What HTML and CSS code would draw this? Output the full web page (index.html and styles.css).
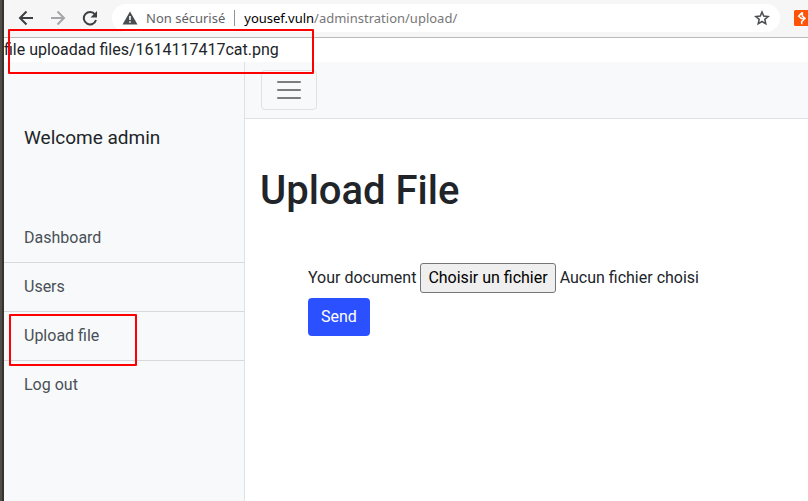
FILE: index.html
```html
<!DOCTYPE html>
<html lang="fr">
<head>
<meta charset="utf-8">
<meta name="viewport" content="width=device-width, initial-scale=1">
<title>Upload File</title>
<link rel="stylesheet" href="styles.css">
</head>
<body>
<div class="window">
  <header class="toolbar">
    <button class="tool" type="button" aria-label="Précédent">
      <svg width="16" height="16" viewBox="0 0 16 16" fill="none" stroke="#3c4043" stroke-width="2"><path d="M15 8H2.5M8.5 1.5 2 8l6.500 6.500"/></svg>
    </button>
    <button class="tool" type="button" aria-label="Suivant" disabled>
      <svg width="16" height="16" viewBox="0 0 16 16" fill="none" stroke="#a5a6a8" stroke-width="2"><path d="M1 8h12.500M7.500 1.500 14 8l-6.500 6.500"/></svg>
    </button>
    <button class="tool" type="button" aria-label="Actualiser">
      <svg width="16" height="16" viewBox="0 0 16 16"><path d="M13 4.500A6.200 6.200 0 1 0 14 10" fill="none" stroke="#3c4043" stroke-width="2"/><path d="M15 1v6.500H8.500z" fill="#3c4043"/></svg>
    </button>
    <div class="address">
      <svg width="16" height="14" viewBox="0 0 16 14"><path d="M8 .5 15.500 13.500H.5z" fill="#4a4d51"/><path d="M7.200 5h1.600v4H7.200zM7.200 10.200h1.600v1.600H7.200z" fill="#fff"/></svg>
      <span class="security">Non sécurisé</span>
      <span class="divider"></span>
      <span class="url"><span class="host">yousef.vuln</span>/adminstration/upload/</span>
      <button class="star" type="button" aria-label="Ajouter aux favoris">
        <svg width="16" height="16" viewBox="0 0 16 16"><path d="m8 2 1.700 4.100 4.500.4-3.400 2.900 1 4.400L8 11.500l-3.800 2.300 1-4.400-3.400-2.900 4.500-.4z" fill="none" stroke="#4a4d51" stroke-width="1.500"/></svg>
      </button>
    </div>
    <button class="extension" type="button" aria-label="Extension">
      <svg width="16" height="16" viewBox="0 0 16 16"><rect width="16" height="16" rx="1.500" fill="#ff5205"/><path d="M8.500 2.200 8.300 6l2.700 2.200-3.400 3.500.2 2.500M8.300 2.200 4.700 6.200l2.600 2.200h3.200" fill="none" stroke="#fff" stroke-width="1.500"/></svg>
    </button>
  </header>

  <div class="notice">file uploadad files/1614117417cat.png<span class="mark mark-notice"></span></div>

  <div class="layout">
    <aside class="sidebar">
      <div class="welcome">Welcome admin</div>
      <nav class="menu">
        <a href="#">Dashboard</a>
        <a href="#">Users</a>
        <a href="#">Upload file<span class="mark mark-item"></span></a>
        <a href="#">Log out</a>
      </nav>
    </aside>
    <div class="page">
      <div class="navbar">
        <button class="toggler" type="button" aria-label="Menu">
          <svg width="30" height="30" viewBox="0 0 30 30" stroke="#7c7d7e" stroke-width="2" stroke-linecap="round"><path d="M4 7h22M4 15h22M4 23h22"/></svg>
        </button>
      </div>
      <main class="content">
        <h1>Upload File</h1>
        <form class="upload">
          <div class="field">
            <label for="document">Your document</label>
            <input class="file-input" id="document" type="file">
            <label class="file-button" for="document">Choisir un fichier</label>
            <span>Aucun fichier choisi</span>
          </div>
          <button class="send" type="button">Send</button>
        </form>
      </main>
    </div>
  </div>
</div>
</body>
</html>
```
FILE: styles.css
```css
* {
  box-sizing: border-box;
}

body {
  margin: 0;
  border-left: 2px solid #504d49;
  background: #fff;
  color: #212529;
  font: 16px/24px Roboto, "Liberation Sans", sans-serif;
}

button {
  margin: 0;
  padding: 0;
  border: 0;
  background: none;
  color: inherit;
  font: inherit;
}

svg {
  display: block;
}

.window {
  display: flex;
  flex-direction: column;
  min-height: 100vh;
  border-left: 2px solid #35322f;
}

.toolbar {
  display: flex;
  align-items: center;
  padding: 4px 0 5px 6px;
  border-bottom: 1px solid #b9b9b9;
  background: #f6f6f6;
  overflow: hidden;
}

.tool {
  display: flex;
  flex: none;
  justify-content: center;
  width: 32px;
}

.address {
  display: flex;
  flex: 1;
  align-items: center;
  min-width: 0;
  height: 28px;
  margin-left: 6px;
  padding: 0 10px;
  border-radius: 14px;
  background: #fff;
  color: #777;
  font: 13px/20px "Noto Sans", "Open Sans", sans-serif;
  white-space: nowrap;
}

.security {
  margin-left: 8px;
  color: #5f6368;
}

.divider {
  width: 1px;
  height: 16px;
  margin: 0 9px;
  background: #919395;
}

.url {
  flex: 1;
  min-width: 0;
  overflow: hidden;
}

.host {
  color: #000;
}

.extension {
  flex: none;
  margin: 0 -2px 0 14px;
}

.notice {
  position: relative;
}

.mark {
  position: absolute;
  z-index: 1;
  border: 2px solid #f00;
  border-radius: 1px;
  pointer-events: none;
}

.mark-notice {
  top: -9px;
  left: 4px;
  width: 306px;
  height: 45px;
}

.mark-item {
  top: 2px;
  left: 5px;
  width: 128px;
  height: 52px;
}

.layout {
  display: flex;
  flex: 1;
}

.sidebar {
  flex: none;
  width: 241px;
  border-right: 1px solid #dee2e6;
  background: #f8f9fa;
}

.welcome {
  padding: 64px 20px;
  font-size: 19px;
}

.menu a {
  display: block;
  position: relative;
  padding: 12px 20px;
  border-bottom: 1px solid #d7d9db;
  color: #495057;
  text-decoration: none;
}

.menu a:last-child {
  border-bottom: 0;
}

.page {
  flex: 1;
  min-width: 0;
}

.navbar {
  padding: 8px 16px;
  border-bottom: 1px solid #dee2e6;
  background: #f8f9fa;
}

.toggler {
  padding: 4px 12px;
  border: 1px solid #dee2e6;
  border-radius: 4px;
  display: block;
}

.content {
  padding: 48px 15px;
}

h1 {
  margin: 0;
  font-size: 40px;
  font-weight: 500;
  line-height: 48px;
}

.upload {
  padding: 48px;
}

.field {
  display: flex;
  flex-wrap: wrap;
  align-items: center;
  gap: 4px;
  margin-bottom: 5px;
}

.file-input {
  position: absolute;
  width: 1px;
  height: 1px;
  opacity: 0;
}

.file-button {
  padding: 2px 7px;
  border: 1px solid #767676;
  border-radius: 3px;
  background: #efefef;
  color: #000;
}

.send {
  padding: 7px 13px;
  border-radius: 4px;
  background: #2b50ff;
  color: #fff;
}
```
